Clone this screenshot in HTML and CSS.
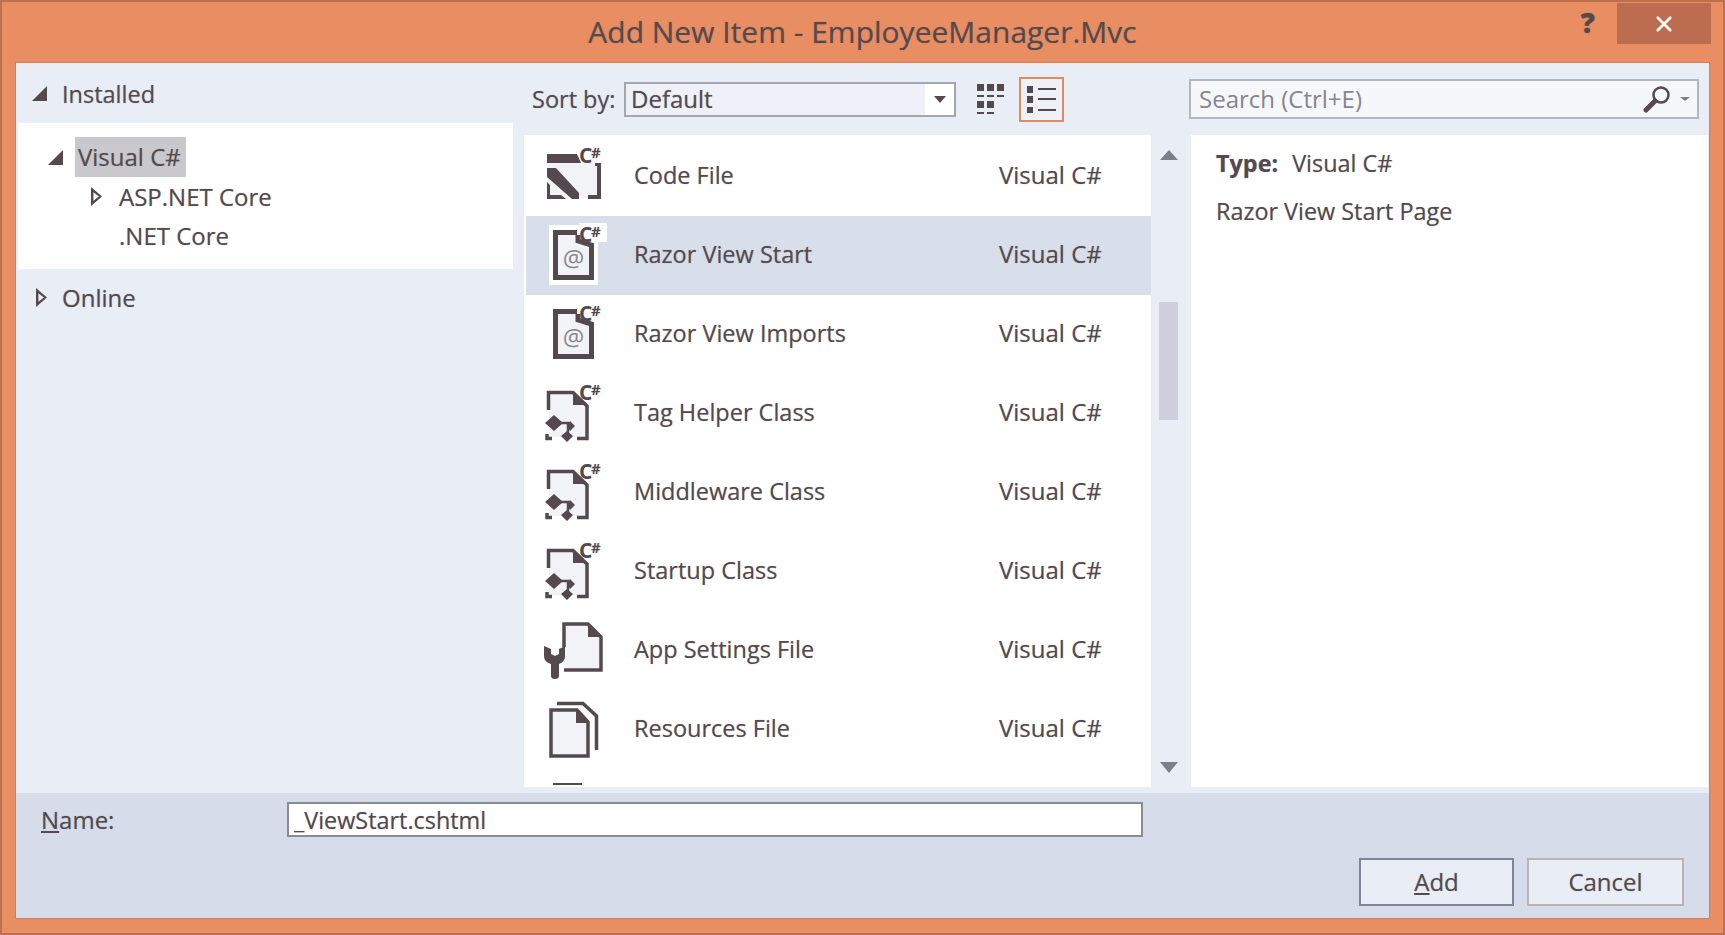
FILE: index.html
```html
<!DOCTYPE html>
<html lang="en">
<head>
    <meta charset="UTF-8">
    <title>Add New Item - EmployeeManager.Mvc</title>
    <link rel="stylesheet" href="styles.css">
</head>
<body>

<svg class="defs" width="0" height="0">
    <symbol id="code" viewBox="0 0 70 70">
        <path class="pale" d="M7 18H57V56H7z"/>
        <path class="ink" d="M7 12H37L41 21H7zM7 26H16L39 51V57H32L7 35zM7 40L10 43V53H21L26 57H7zM55 21H61V57H48V53H57V24H55z"/>
    </symbol>
    <symbol id="razor" viewBox="0 0 70 70">
        <path class="pale" d="M15 12H37V24H52V57H15z"/>
        <path class="line thick" d="M37 11.500H15.500V56.500H51.500V24L38 20V14"/>
    </symbol>
    <symbol id="tag" viewBox="0 0 70 70">
        <path class="pale" d="M9 14H33L47 27V58H9z"/>
        <path class="line" d="M8.500 31V13.500H33L47 27V59.500H37M7 55V59.500H12"/>
        <path class="ink" d="M33 13V26H47zM14 36L23 44L14 52L5 44zM27 52L33 57L27 63L21 57zM30 42L35 47L30 52L27 47z"/>
        <path class="line thin" d="M20 44H28V57"/>
    </symbol>
    <symbol id="settings" viewBox="0 0 70 70">
        <path class="pale" d="M24 8H48L61 21V54H24z"/>
        <path class="line" d="M24 31V8H48L61 21V54H24"/>
        <path class="ink" d="M48 8V21H61zM4 30V40Q4 46 11 48V60Q11 63 15 63Q19 63 19 60V48Q25 46 25 40V30L19 33V38L15 40L11 38V33z"/>
    </symbol>
    <symbol id="resources" viewBox="0 0 70 70">
        <path class="pale" d="M11 15H37L48 27V61H11z"/>
        <path class="line" d="M17 8.500H43L56.500 21V55M11 15H37L48 27V61H11z"/>
        <path class="ink" d="M36 15V28H49z"/>
    </symbol>
</svg>

<div class="window">

    <div class="titlebar">
        <h1>Add New Item - EmployeeManager.Mvc</h1>
        <span class="help">?</span>
        <span class="close">
            <svg width="18" height="18" viewBox="0 0 18 18"><path d="M2 2L16 16M16 2L2 16"/></svg>
        </span>
    </div>

    <div class="dialog">
        <div class="body">

            <div class="sidebar">
                <div class="group open">
                    <span class="arrow-down"></span>Installed
                </div>
                <ul class="tree">
                    <li class="tree-visual"><span class="arrow-down"></span><span class="picked">Visual C#</span></li>
                    <li class="tree-sub"><span class="arrow-right"></span>ASP.NET Core</li>
                    <li class="tree-sub">.NET Core</li>
                </ul>
                <div class="group online">
                    <span class="arrow-right"></span>Online
                </div>
            </div>

            <div class="main">
                <div class="toolbar">
                    <span class="sort-label">Sort by:</span>
                    <div class="combo">
                        <span class="combo-text">Default</span>
                        <span class="combo-drop"><i class="caret"></i></span>
                    </div>
                    <svg class="view-grid" width="27" height="30" viewBox="0 0 27 30">
                        <path d="M0 0H7V7H0zM10 0H17V7H10zM20 0H27V7H20zM0 11H7V13H0zM10 11H17V13H10zM20 11H27V13H20zM0 17H7V24H0zM10 17H17V24H10zM0 28H7V30H0zM10 28H17V30H10z"/>
                    </svg>
                    <div class="view-list">
                        <svg width="29" height="27" viewBox="0 0 29 27">
                            <path d="M0 0H6V7H0zM11 2H29V4H11zM0 10H6V17H0zM11 12H29V14H11zM0 21H6V27H0zM11 23H29V25H11z"/>
                        </svg>
                    </div>
                    <div class="search">
                        <span class="search-text">Search (Ctrl+E)</span>
                        <svg class="glass" width="28" height="28" viewBox="0 0 28 28">
                            <circle cx="18" cy="10" r="7.500"/>
                            <path d="M12 16L3 25"/>
                        </svg>
                        <i class="caret small"></i>
                    </div>
                </div>

                <div class="panes">
                    <div class="list">
                        <div class="row">
                            <svg class="icon"><use href="#code"/><text class="cs-c" x="39" y="21">C</text><text class="cs-h" x="51" y="16">#</text></svg>
                            <span class="row-name">Code File</span>
                            <span class="row-type">Visual C#</span>
                        </div>
                        <div class="row selected">
                            <svg class="icon">
                                <path class="glow" d="M9 4H39V2H67V21H58V64H9z"/>
                                <use href="#razor"/>
                                <text class="at" x="33.500" y="46">@</text>
                                <text class="cs-c" x="39" y="21">C</text><text class="cs-h" x="51" y="16">#</text>
                            </svg>
                            <span class="row-name">Razor View Start</span>
                            <span class="row-type">Visual C#</span>
                        </div>
                        <div class="row">
                            <svg class="icon">
                                <use href="#razor"/>
                                <text class="at" x="33.500" y="46">@</text>
                                <text class="cs-c" x="39" y="21">C</text><text class="cs-h" x="51" y="16">#</text>
                            </svg>
                            <span class="row-name">Razor View Imports</span>
                            <span class="row-type">Visual C#</span>
                        </div>
                        <div class="row">
                            <svg class="icon"><use href="#tag"/><text class="cs-c" x="39" y="21">C</text><text class="cs-h" x="51" y="16">#</text></svg>
                            <span class="row-name">Tag Helper Class</span>
                            <span class="row-type">Visual C#</span>
                        </div>
                        <div class="row">
                            <svg class="icon"><use href="#tag"/><text class="cs-c" x="39" y="21">C</text><text class="cs-h" x="51" y="16">#</text></svg>
                            <span class="row-name">Middleware Class</span>
                            <span class="row-type">Visual C#</span>
                        </div>
                        <div class="row">
                            <svg class="icon"><use href="#tag"/><text class="cs-c" x="39" y="21">C</text><text class="cs-h" x="51" y="16">#</text></svg>
                            <span class="row-name">Startup Class</span>
                            <span class="row-type">Visual C#</span>
                        </div>
                        <div class="row">
                            <svg class="icon"><use href="#settings"/></svg>
                            <span class="row-name">App Settings File</span>
                            <span class="row-type">Visual C#</span>
                        </div>
                        <div class="row">
                            <svg class="icon"><use href="#resources"/></svg>
                            <span class="row-name">Resources File</span>
                            <span class="row-type">Visual C#</span>
                        </div>
                        <div class="row">
                            <svg class="icon"><path class="ink" d="M13 9H42V11H13z"/></svg>
                        </div>
                    </div>

                    <div class="scrollbar">
                        <i class="scroll-up"></i>
                        <i class="scroll-thumb"></i>
                        <i class="scroll-down"></i>
                    </div>

                    <div class="details">
                        <p class="detail-type"><b>Type:</b><span>Visual C#</span></p>
                        <p class="detail-desc">Razor View Start Page</p>
                    </div>
                </div>
            </div>
        </div>

        <div class="footer">
            <div class="name-row">
                <label class="name-label" for="name"><u>N</u>ame:</label>
                <input class="name-input" id="name" value="_ViewStart.cshtml">
            </div>
            <div class="buttons">
                <button class="btn btn-default"><u>A</u>dd</button>
                <button class="btn btn-cancel">Cancel</button>
            </div>
        </div>
    </div>
</div>

</body>
</html>
```

FILE: styles.css
```css
* {
    box-sizing: border-box;
}

html, body {
    margin: 0;
    padding: 0;
}

body {
    font-family: "Open Sans", "Noto Sans", sans-serif;
    font-size: 24px;
    color: #544a4d;
    background: #e98d63;
    text-shadow: 0 0 1px rgba(84, 74, 77, .45);
}

.defs {
    position: absolute;
}

.window {
    width: 1725px;
    height: 935px;
    display: flex;
    flex-direction: column;
    background: #e98d63;
    border: 2px solid #bd7050;
}

/* title bar */
.titlebar {
    height: 61px;
    flex: none;
    display: flex;
    align-items: flex-start;
    position: relative;
}

.titlebar h1 {
    flex: 1;
    margin: 10px 0 0 0;
    text-align: center;
    font-size: 30px;
    font-weight: 400;
    line-height: 40px;
    color: #544a4d;
}

.help {
    position: absolute;
    right: 128px;
    top: 2px;
    font-size: 28px;
    line-height: 36px;
    font-weight: 800;
}

.close {
    position: absolute;
    right: 12px;
    top: 1px;
    width: 94px;
    height: 41px;
    background: #bd6e50;
    display: flex;
    align-items: center;
    justify-content: center;
}

.close path {
    stroke: white;
    stroke-width: 2.500;
    fill: none;
}

/* dialog */
.dialog {
    flex: none;
    height: 855px;
    margin: 0 14px 0 14px;
    display: flex;
    flex-direction: column;
    background: #e8edf6;
    box-shadow: 0 0 0 1px #cf7f5a;
}

.body {
    height: 730px;
    flex: none;
    display: flex;
}

/* left */
.sidebar {
    width: 508px;
    flex: none;
}

.group {
    display: flex;
    align-items: center;
    padding-left: 46px;
    position: relative;
}

.group.open {
    height: 60px;
    padding-top: 2px;
    font-size: 23.500px;
}

.group.online {
    height: 56px;
}

.group .arrow-down {
    position: absolute;
    left: 16px;
    top: 23px;
}

.group .arrow-right {
    position: absolute;
    left: 20px;
    top: 19px;
}

.arrow-down {
    display: block;
    width: 0;
    height: 0;
    border-style: solid;
    border-width: 0 0 15px 15px;
    border-color: transparent transparent #544a4d transparent;
}

.arrow-right {
    display: block;
    width: 11px;
    height: 19px;
    background: #544a4d;
    clip-path: polygon(0 0, 100% 50%, 0 100%, 0 15%, 22% 28%, 22% 72%, 72% 50%, 22% 28%, 0 15%);
}

.tree {
    list-style: none;
    margin: 0 0 0 2px;
    padding: 14px 0 14px 0;
    width: 495px;
    height: 146px;
    background: white;
}

.tree li {
    height: 39px;
    display: flex;
    align-items: center;
    position: relative;
}

.tree li.tree-visual {
    height: 40px;
    padding-left: 57px;
}

.tree-visual .arrow-down {
    position: absolute;
    left: 30px;
    top: 13px;
}

.picked {
    background: #c9c9cd;
    height: 40px;
    line-height: 40px;
    padding: 0 3px;
    width: 111px;
    white-space: nowrap;
}

.tree-sub {
    padding-left: 101px;
}

.tree-sub .arrow-right {
    position: absolute;
    left: 73px;
    top: 10px;
}

/* toolbar */
.main {
    flex: 1;
    min-width: 0;
}

.toolbar {
    height: 72px;
    display: flex;
    align-items: center;
    padding-left: 8px;
    padding-right: 10px;
}

.sort-label {
    width: 92px;
    flex: none;
    white-space: nowrap;
    font-size: 23.500px;
}

.combo {
    width: 332px;
    height: 35px;
    flex: none;
    display: flex;
    border: 2px solid #a5a7b0;
    background: #eef1f8;
}

.combo-text {
    flex: 1;
    padding-left: 5px;
    line-height: 29px;
}

.combo-drop {
    width: 29px;
    background: white;
    display: flex;
    align-items: center;
    justify-content: center;
}

.caret {
    display: block;
    width: 0;
    height: 0;
    border-style: solid;
    border-width: 7px 6px 0 6px;
    border-color: #544a4d transparent transparent transparent;
}

.caret.small {
    border-width: 4px 5px 0 5px;
    border-color: #7d7c85 transparent transparent transparent;
}

.view-grid {
    margin-left: 21px;
    flex: none;
}

.view-grid path, .view-list path {
    fill: #544a4d;
}

.view-list {
    width: 45px;
    height: 45px;
    margin-left: 15px;
    flex: none;
    border: 2px solid #e08a60;
    background: #eef1f8;
    display: flex;
    align-items: center;
    justify-content: center;
}

.search {
    width: 510px;
    height: 40px;
    margin-left: 125px;
    flex: none;
    display: flex;
    align-items: center;
    border: 2px solid #b3b5bf;
    background: #f5f7fb;
    padding: 0 7px 0 8px;
}

.search-text {
    flex: 1;
    color: #85858f;
    padding-bottom: 2px;
    text-shadow: none;
}

.glass {
    margin-right: 9px;
}

.glass circle {
    fill: none;
    stroke: #544a4d;
    stroke-width: 2.500;
}

.glass path {
    stroke: #544a4d;
    stroke-width: 5;
    stroke-linecap: round;
}

/* list and details */
.panes {
    height: 652px;
    display: flex;
}

.list {
    width: 627px;
    flex: none;
    background: white;
    padding: 2px 0 0 2px;
    overflow: hidden;
}

.row {
    height: 79px;
    display: flex;
    align-items: center;
    padding-left: 14px;
}

.row.selected {
    background: #d9deeb;
}

.icon {
    width: 70px;
    height: 70px;
    flex: none;
}

.row-name {
    width: 365px;
    margin-left: 24px;
    flex: none;
    white-space: nowrap;
    font-size: 23.500px;
    padding-bottom: 4px;
}

.row-type {
    white-space: nowrap;
    padding-bottom: 4px;
}

.pale {
    fill: #f2f3f7;
}

.ink {
    fill: #544a4d;
}

.line {
    fill: none;
    stroke: #544a4d;
    stroke-width: 3.500;
}

.line.thick {
    stroke-width: 5;
}

.line.thin {
    stroke-width: 2.500;
}

.glow {
    fill: white;
}

.at {
    font-size: 24px;
    fill: #86868c;
    text-anchor: middle;
    text-shadow: none;
}

.cs-c {
    font-size: 21px;
    font-weight: 700;
    fill: #544a4d;
    text-shadow: none;
}

.cs-h {
    font-size: 15px;
    font-weight: 700;
    fill: #544a4d;
    text-shadow: none;
}

.scrollbar {
    width: 36px;
    flex: none;
    position: relative;
    background: #e8edf6;
}

.scroll-up, .scroll-down, .scroll-thumb {
    position: absolute;
    display: block;
}

.scroll-up {
    left: 9px;
    top: 15px;
    width: 0;
    height: 0;
    border-style: solid;
    border-width: 0 9px 10px 9px;
    border-color: transparent transparent #7d7f8c transparent;
}

.scroll-thumb {
    left: 8px;
    top: 167px;
    width: 19px;
    height: 118px;
    background: #cdd0dc;
}

.scroll-down {
    left: 9px;
    top: 627px;
    width: 0;
    height: 0;
    border-style: solid;
    border-width: 11px 9px 0 9px;
    border-color: #7d7f8c transparent transparent transparent;
}

.details {
    flex: 1;
    margin-left: 4px;
    margin-right: 1px;
    background: white;
    padding: 11px 0 0 25px;
    font-size: 23.400px;
}

.details p {
    margin: 0;
    height: 34px;
    line-height: 34px;
    white-space: nowrap;
}

.detail-type b {
    font-weight: 700;
    margin-right: 14px;
}

.details .detail-desc {
    margin-top: 14px;
}

/* footer */
.footer {
    flex: 1;
    background: #d6dcea;
    padding: 3px 25px 0 25px;
}

.name-row {
    display: flex;
    align-items: center;
    height: 35px;
    margin-top: 6px;
}

.name-label {
    width: 246px;
    flex: none;
}

.name-input {
    width: 856px;
    height: 35px;
    border: 2px solid #8b8b93;
    background: white;
    font: inherit;
    font-size: 23.400px;
    color: inherit;
    text-shadow: inherit;
    padding: 0 5px;
    outline: none;
}

.buttons {
    display: flex;
    justify-content: flex-end;
    gap: 13px;
    margin-top: 21px;
}

.btn {
    height: 48px;
    font: inherit;
    color: inherit;
    text-shadow: inherit;
    background: #e8edf6;
    border: 2px solid #7d8597;
    padding: 0 0 2px 0;
}

.btn-default {
    width: 155px;
}

.btn-cancel {
    width: 157px;
    border-color: #b9b3b3;
}
```
